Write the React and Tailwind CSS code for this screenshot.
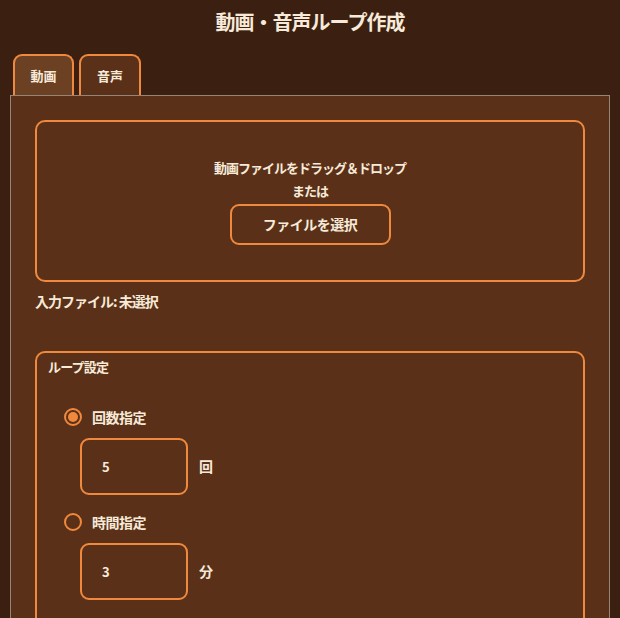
import { useState } from "react";

function Radio({ checked, label, onClick }) {
    return (
        <button type="button" onClick={onClick} className="flex items-center gap-[10px] ml-[27px]">
            <span className="w-[18px] h-[18px] rounded-full border-2 border-[#f0893d] flex items-center justify-center">
                {checked && <span className="w-[10px] h-[10px] rounded-full bg-[#f0893d]" />}
            </span>
            <span className="text-[14px] font-bold leading-5 tracking-[-0.5px]">{label}</span>
        </button>
    );
}

function NumberField({ value, unit }) {
    return (
        <div className="flex items-center gap-[11px] ml-[43px]">
            <div className="w-[108px] h-[57px] rounded-[9px] border-2 border-[#f0893d] flex items-center pl-[20px] text-[13px] font-bold">
                {value}
            </div>
            <span className="text-[14px] font-bold">{unit}</span>
        </div>
    );
}

export default function App() {
    const [tab, setTab] = useState("video");
    const [mode, setMode] = useState("count");

    return (
        <div
            className="min-h-screen bg-[#3b2012] text-[#f7ead8] overflow-hidden"
            style={{ fontFamily: '"Noto Sans CJK JP", "Noto Sans", sans-serif' }}
        >
            <h1 className="text-center text-[20px] font-bold leading-7 pt-[8px] tracking-[-1px]">動画・音声ループ作成</h1>

            {/* Tabs */}
            <div className="flex gap-[5px] pl-[13px] mt-[18px]">
                <button
                    onClick={() => setTab("video")}
                    className={`w-[61px] h-[41px] rounded-t-[9px] border-2 border-b-0 border-[#f0893d] text-[13px] font-bold ${tab === "video" ? "bg-[#6b4023]" : "bg-[#5a3118]"}`}
                >
                    動画
                </button>
                <button
                    onClick={() => setTab("audio")}
                    className={`w-[62px] h-[41px] rounded-t-[9px] border-2 border-b-0 border-[#f0893d] text-[13px] font-bold ${tab === "audio" ? "bg-[#6b4023]" : "bg-[#5a3118]"}`}
                >
                    音声
                </button>
            </div>

            {/* Panel */}
            <div className="mx-[10px] bg-[#5a3118] border border-[#958576] px-[24px] pt-[24px] pb-[24px]">
                <div className="h-[162px] rounded-[10px] border-2 border-[#f0893d] flex flex-col items-center justify-center">
                    <p className="text-[13px] font-bold leading-5 tracking-[-1px]">動画ファイルをドラッグ＆ドロップ</p>
                    <p className="text-[13px] font-bold leading-5 mt-[3px] tracking-[-1px]">または</p>
                    <button className="mt-[3px] w-[161px] h-[41px] rounded-[9px] border-2 border-[#f0893d] text-[14px] font-bold tracking-[-0.5px]">
                        ファイルを選択
                    </button>
                </div>

                <p className="mt-[9px] text-[14px] font-bold leading-5 tracking-[-1px]">入力ファイル: 未選択</p>

                <div className="mt-[40px] rounded-[10px] border-2 border-[#f0893d] pt-[4px] pb-[40px]">
                    <p className="ml-[11px] text-[13px] font-bold leading-5 tracking-[-0.8px]">ループ設定</p>
                    <div className="mt-[30px]">
                        <Radio checked={mode === "count"} label="回数指定" onClick={() => setMode("count")} />
                    </div>
                    <div className="mt-[11px]">
                        <NumberField value="5" unit="回" />
                    </div>
                    <div className="mt-[17px]">
                        <Radio checked={mode === "time"} label="時間指定" onClick={() => setMode("time")} />
                    </div>
                    <div className="mt-[11px]">
                        <NumberField value="3" unit="分" />
                    </div>
                </div>
            </div>
        </div>
    );
}
